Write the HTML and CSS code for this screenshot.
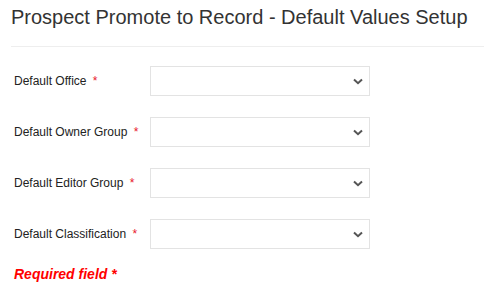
FILE: index.html
```html
<!DOCTYPE html>
<html lang="en">
<head>
  <meta charset="UTF-8" />
  <title>Default Values Setup</title>
  <link rel="stylesheet" href="styles.css">
</head>
<body>

<div class="page">
  <h1 class="title">Prospect Promote to Record - Default Values Setup</h1>

  <form class="setup-form">
    <div class="form-row">
      <label class="field-label">Default Office <span class="req">*</span></label>
      <div class="select-wrap">
        <select class="field-select"><option></option></select>
        <svg class="chevron" width="10" height="7" viewBox="0 0 10 7"><path d="M1 1.5 L5 5.2 L9 1.5" fill="none" stroke="#555" stroke-width="2"/></svg>
      </div>
    </div>
    <div class="form-row">
      <label class="field-label">Default Owner Group <span class="req">*</span></label>
      <div class="select-wrap">
        <select class="field-select"><option></option></select>
        <svg class="chevron" width="10" height="7" viewBox="0 0 10 7"><path d="M1 1.5 L5 5.2 L9 1.5" fill="none" stroke="#555" stroke-width="2"/></svg>
      </div>
    </div>
    <div class="form-row">
      <label class="field-label">Default Editor Group <span class="req">*</span></label>
      <div class="select-wrap">
        <select class="field-select"><option></option></select>
        <svg class="chevron" width="10" height="7" viewBox="0 0 10 7"><path d="M1 1.5 L5 5.2 L9 1.5" fill="none" stroke="#555" stroke-width="2"/></svg>
      </div>
    </div>
    <div class="form-row">
      <label class="field-label">Default Classification <span class="req">*</span></label>
      <div class="select-wrap">
        <select class="field-select"><option></option></select>
        <svg class="chevron" width="10" height="7" viewBox="0 0 10 7"><path d="M1 1.5 L5 5.2 L9 1.5" fill="none" stroke="#555" stroke-width="2"/></svg>
      </div>
    </div>

    <div class="required-note">Required field *</div>
  </form>
</div>

</body>
</html>
```

FILE: styles.css
```css
body {
  margin: 0;
  font-family: "Liberation Sans", Arial, sans-serif;
  color: #333;
  background: #fff;
}

.page {
  padding-left: 11px;
}

.title {
  margin: 0;
  padding-top: 6px;
  font-size: 20px;
  font-weight: normal;
  line-height: 23px;
  color: #333;
  padding-bottom: 17px;
  border-bottom: 1px solid #eee;
}

.setup-form {
  display: flex;
  flex-direction: column;
  gap: 21px;
  padding-top: 19px;
  padding-left: 3px;
}

.form-row {
  display: flex;
  align-items: center;
}

.field-label {
  width: 136px;
  font-size: 12px;
  color: #222;
}

.req {
  color: #e8192c;
  margin-left: 3px;
}

.select-wrap {
  position: relative;
  width: 220px;
  height: 30px;
}

.field-select {
  appearance: none;
  width: 100%;
  height: 100%;
  border: 1px solid #e3e3e3;
  border-radius: 0;
  background: #fff;
  margin: 0;
}

.chevron {
  position: absolute;
  right: 7px;
  top: 12px;
  pointer-events: none;
}

.required-note {
  margin-top: -4px;
  font-size: 14px;
  font-weight: bold;
  font-style: italic;
  color: #f00;
}
```
